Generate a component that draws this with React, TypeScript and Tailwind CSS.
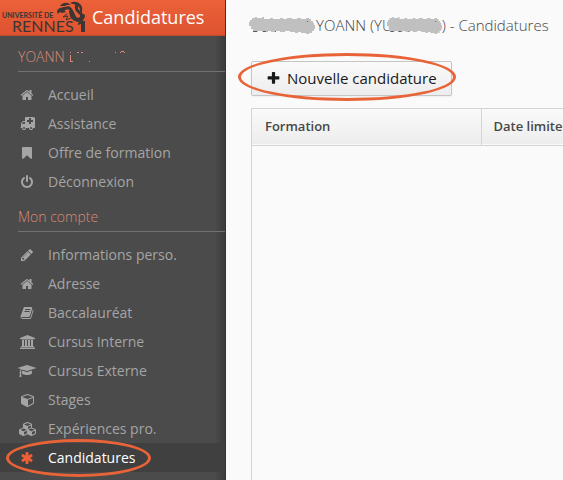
import type { ReactNode } from "react"

type IconName = keyof typeof icons

interface NavItem {
  label: string
  icon: IconName
  active?: boolean
}

const icons = {
  home: {
    width: 1792,
    d: "M1472 992v480q0 26-19 45t-45 19h-384v-384h-256v384h-384q-26 0-45-19t-19-45v-480q0-1 .5-3t.5-3l575-474 575 474q1 2 1 6zm223-69l-62 74q-8 9-21 11h-3q-13 0-21-7l-692-577-692 577q-12 8-24 7-13-2-21-11l-62-74q-8-10-7-23.5t11-21.5l719-599q32-26 76-26t76 26l244 204v-195q0-14 9-23t23-9h192q14 0 23 9t9 23v408l219 182q10 8 11 21.5t-7 23.5z",
  },
  ambulance: {
    width: 1920,
    d: "M640 1408q0-52-38-90t-90-38-90 38-38 90 38 90 90 38 90-38 38-90zm-384-512h384v-256h-158q-14 2-22 9l-195 195q-7 12-9 22v30zm1280 512q0-52-38-90t-90-38-90 38-38 90 38 90 90 38 90-38 38-90zm128-800v-192q0-14-9-23t-23-9h-224v-224q0-14-9-23t-23-9h-192q-14 0-23 9t-9 23v224h-224q-14 0-23 9t-9 23v192q0 14 9 23t23 9h224v224q0 14 9 23t23 9h192q14 0 23-9t9-23v-224h224q14 0 23-9t9-23zm256-544v1280q0 26-19 45t-45 19h-192q0 106-75 181t-181 75-181-75-75-181h-384q0 106-75 181t-181 75-181-75-75-181h-128q-26 0-45-19t-19-45 19-45 45-19v-416q0-26 13-58t32-51l198-198q19-19 51-32t58-13h160v-448q0-26 19-45t45-19h1024q26 0 45 19t19 45z",
  },
  bookmark: {
    width: 1792,
    d: "M1420 128q23 0 44 9 33 13 52.5 41t19.5 62v1289q0 34-19.5 62t-52.5 41q-19 8-44 8-48 0-83-32l-441-424-441 424q-36 33-83 33-23 0-44-9-33-13-52.5-41t-19.5-62v-1289q0-34 19.5-62t52.5-41q21-9 44-9h1048z",
  },
  power: {
    width: 1792,
    d: "M1664 896q0 156-61 298t-164 245-245 164-298 61-298-61-245-164-164-245-61-298q0-182 80.5-343t226.5-270q43-32 95.5-25t83.5 50q32 42 24.5 94.5t-49.5 84.5q-98 74-151.5 181t-53.5 228q0 104 40.5 198.5t109.5 163.5 163.5 109.5 198.5 40.5 198.5-40.5 163.5-109.5 109.5-163.5 40.5-198.5q0-121-53.5-228t-151.5-181q-42-32-49.5-84.5t24.5-94.5q31-43 84-50t95 25q146 109 226.5 270t80.5 343zm-640-768v640q0 52-38 90t-90 38-90-38-38-90v-640q0-52 38-90t90-38 90 38 38 90z",
  },
  pencil: {
    width: 1792,
    d: "M491 1536l91-91-235-235-91 91v107h128v128h107zm523-928q0-22-22-22-10 0-17 7l-542 542q-7 7-7 17 0 22 22 22 10 0 17-7l542-542q7-7 7-17zm-54-192l416 416-832 832h-416v-416zm683 96q0 53-37 90l-166 166-416-416 166-165q36-38 90-38 53 0 91 38l235 234q37 39 37 91z",
  },
  book: {
    width: 1792,
    d: "M1703 478q40 57 18 129l-275 906q-19 64-76.5 107.5t-122.5 43.5h-923q-77 0-148.5-53.5t-99.5-131.5q-24-67-2-127 0-4 3-27t4-37q1-8-3-21.5t-3-19.5q2-11 8-21t16.5-23.5 16.5-23.5q23-38 45-91.5t30-91.5q3-10 .5-30t-.5-28q3-11 17-28t17-23q21-36 42-92t25-90q1-9-2.5-32t.5-28q4-13 22-30.5t22-22.5q19-26 42.5-84.5t27.5-96.5q1-8-3-25.5t-2-26.5q2-8 9-18t18-23 17-21q8-12 16.5-30.5t15-35 16-36 19.5-32 26.5-23.5 36-11.5 47.5 5.5l-1 3q38-9 51-9h761q74 0 114 56t18 130l-274 906q-36 119-71.5 153.5t-128.5 34.5h-869q-27 0-38 15-11 16-1 43 24 70 144 70h923q29 0 56-15.5t35-41.5l300-987q7-22 5-57 38 15 59 43zm-1064 2q-4 13 2 22.5t20 9.5h608q13 0 25.5-9.5t16.5-22.5l21-64q4-13-2-22.5t-20-9.5h-608q-13 0-25.5 9.5t-16.5 22.5zm-83 256q-4 13 2 22.5t20 9.5h608q13 0 25.5-9.5t16.5-22.5l21-64q4-13-2-22.5t-20-9.5h-608q-13 0-25.5 9.5t-16.5 22.5z",
  },
  university: {
    width: 1920,
    d: "M960 0l960 384v128h-128q0 26-20.5 45t-48.5 19h-1526q-28 0-48.5-19t-20.5-45h-128v-128zm-704 640h256v768h128v-768h256v768h128v-768h256v768h128v-768h256v768h59q28 0 48.5 19t20.5 45v64h-1664v-64q0-26 20.5-45t48.5-19h59v-768zm1595 960q28 0 48.5 19t20.5 45v128h-1920v-128q0-26 20.5-45t48.5-19h1782z",
  },
  graduation: {
    width: 2304,
    d: "M1774 836l18 316q4 69-82 128t-235 93.5-323 34.5-323-34.5-235-93.5-82-128l18-316 574 181q22 7 48 7t48-7zm530-324q0 23-22 31l-1120 352q-4 1-10 1t-10-1l-652-206q-43 34-71 111.5t-34 178.5q63 36 63 109 0 69-58 107l58 433q2 14-8 25-9 11-24 11h-192q-15 0-24-11-10-11-8-25l58-433q-58-38-58-107 0-73 65-111 11-207 98-330l-333-104q-22-8-22-31t22-31l1120-352q4-1 10-1t10 1l1120 352q22 8 22 31z",
  },
  cube: {
    width: 1664,
    d: "M896 1629l640-349v-636l-640 233v752zm-64-865l698-254-698-254-698 254zm832-252v768q0 35-18 65t-49 47l-704 384q-28 16-61 16t-61-16l-704-384q-31-17-49-47t-18-65v-768q0-40 23-73t61-47l704-256q22-8 44-8t44 8l704 256q38 14 61 47t23 73z",
  },
  cubes: {
    width: 2176,
    d: "M640 1632l384-192v-314l-384 164v342zm-64-454l404-173-404-173-404 173zm1088 454l384-192v-314l-384 164v342zm-64-454l404-173-404-173-404 173zm-448-293l384-165v-266l-384 164v267zm-64-379l441-189-441-189-441 189zm1088 518v416q0 36-19 67t-52 47l-448 224q-25 14-57 14t-57-14l-448-224q-4-2-7-4-2 2-7 4l-448 224q-25 14-57 14t-57-14l-448-224q-33-16-52-47t-19-67v-416q0-38 21.5-70t56.5-48l434-186v-400q0-38 21.5-70t56.5-48l448-192q23-10 50-10t50 10l448 192q35 16 56.5 48t21.5 70v400l434 186q36 16 57 48t21 70z",
  },
  asterisk: {
    width: 1792,
    d: "M1546 1050q46 26 59.5 77.5t-12.5 97.5l-64 110q-26 46-77.5 59.5t-97.5-12.5l-266-153v307q0 52-38 90t-90 38h-128q-52 0-90-38t-38-90v-307l-266 153q-46 26-97.5 12.5t-77.5-59.5l-64-110q-26-46-12.5-97.5t59.5-77.5l266-154-266-154q-46-26-59.5-77.5t12.5-97.5l64-110q26-46 77.5-59.5t97.5 12.5l266 153v-307q0-52 38-90t90-38h128q52 0 90 38t38 90v307l266-153q46-26 97.5-12.5t77.5 59.5l64 110q26 46 12.5 97.5t-59.5 77.5l-266 154z",
  },
  plus: {
    width: 1792,
    d: "M1600 736v192q0 40-28 68t-68 28h-416v416q0 40-28 68t-68 28h-192q-40 0-68-28t-28-68v-416h-416q-40 0-68-28t-28-68v-192q0-40 28-68t68-28h416v-416q0-40 28-68t68-28h192q40 0 68 28t28 68v416h416q40 0 68 28t28 68z",
  },
}

const userItems: NavItem[] = [
  { label: "Accueil", icon: "home" },
  { label: "Assistance", icon: "ambulance" },
  { label: "Offre de formation", icon: "bookmark" },
  { label: "Déconnexion", icon: "power" },
]

const accountItems: NavItem[] = [
  { label: "Informations perso.", icon: "pencil" },
  { label: "Adresse", icon: "home" },
  { label: "Baccalauréat", icon: "book" },
  { label: "Cursus Interne", icon: "university" },
  { label: "Cursus Externe", icon: "graduation" },
  { label: "Stages", icon: "cube" },
  { label: "Expériences pro.", icon: "cubes" },
  { label: "Candidatures", icon: "asterisk", active: true },
]

function Icon({ name, className }: { name: IconName; className: string }) {
  return (
    <svg viewBox={`0 0 ${icons[name].width} 1792`} className={`w-auto shrink-0 fill-current ${className}`} aria-hidden="true">
      <path d={icons[name].d} />
    </svg>
  )
}

function Logo() {
  return (
    <svg viewBox="0 0 88 35" className="h-[35px] w-[88px] shrink-0 fill-[#3b3533]" aria-hidden="true">
      <text x="2" y="18" fontSize="7" fontFamily="Lato, sans-serif" fontWeight="700">UNIVERSITÉ DE</text>
      <text x="12" y="32" fontSize="16" fontFamily="Lato, sans-serif">RENNES</text>
      <path d="M81 21h4v11h-4v-8l-3 1v-2z" />
      {/* dragon: head, wings, coiled body */}
      <path d="M57 12q0-3 3-4l4-1q3 0 3 2l-3 1 2 2-4 1-2-1-2 2z" />
      <path d="M60 6q3-4 8-3l3 2q-4-1-6 1zM70 3q6-3 10 1 3 3 2 7l-1 5-1-5q0-5-4-6-3-1-6-2z" />
      <g fill="none" stroke="#3b3533" strokeLinecap="round">
        <path d="M64 9q5-3 7 1t4 8q4 3 6 0t-2-6-2-7" strokeWidth="3" />
        <path d="M71 12q1 7 7 8 4 0 5-4" strokeWidth="4" />
        <path d="M67 14l-4 3 5-1-2 4 5-2" strokeWidth="1" />
      </g>
    </svg>
  )
}

// Grey marker stroke that hides part of a name
function Scribble({ className }: { className: string }) {
  return (
    <svg viewBox="0 0 66 17" preserveAspectRatio="none" className={`shrink-0 fill-[#c0c0c0] ${className}`} aria-hidden="true">
      <path d="M0 5H1V3H3V1H6V0H8V1H13V0H15V2H21V1H24V2H31V1H34V2H38V1H43V2H48V1H52V2H57V1H60V2H62V4H64V6H65V8H66V12H65V14H63V16H60V17H57V16H52V15H49V16H46V15H41V14H36V15H31V14H27V15H22V14H19V15H13V14H9V15H6V14H4V12H2V9H0Z" />
      <path d="M4 14h4v1H4zM14 14h3v1h-3zM26 14h1v1h-1zM58 4h1v1h-1z" fill="#5c5c5c" />
    </svg>
  )
}

function NavGroup({ title, items }: { title: ReactNode; items: NavItem[] }) {
  return (
    <section>
      <h2 className="ml-[18px] flex h-7 items-center border-b border-[#717171] pb-0.5 text-sm font-light text-[#d98a77]">
        {title}
      </h2>
      <ul className="pt-2">
        {items.map((item) => (
          <li key={item.label} className="relative">
            <a
              href="#"
              aria-current={item.active ? "page" : undefined}
              className={`flex h-[29px] items-center gap-3 pl-[18px] text-sm ${
                item.active ? "bg-[#404040] text-white" : "text-[#a5a5a5]"
              }`}
            >
              <span className={`flex w-[18px] justify-center ${item.active ? "text-[#ed5f35]" : ""}`}>
                <Icon name={item.icon} className="h-3.5" />
              </span>
              {item.label}
            </a>
            {item.active && (
              <span className="pointer-events-none absolute -top-1 left-1.5 h-[38px] w-[145px] rounded-[50%] border-3 border-[#e96338]" />
            )}
          </li>
        ))}
      </ul>
    </section>
  )
}

export default function App() {
  return (
    <div className="flex min-h-screen overflow-hidden bg-[#fafafa] font-['Open_Sans',sans-serif]">
      <aside className="w-[226px] shrink-0 border-r border-[#363636] bg-[linear-gradient(to_left,#3c3c3c,#4b4b4b_10px)]">
        <header className="flex h-9 items-start gap-1 border-b border-[#b94d2c] bg-linear-to-b from-[#ec6239] to-[#dd5130]">
          <Logo />
          <h1 className="text-lg leading-[35px] text-white">Candidatures</h1>
        </header>
        <nav className="flex flex-col gap-2 pt-2">
          <NavGroup
            title={
              <>
                YOANN
                <svg viewBox="0 0 62 16" className="ml-1 h-4 w-[62px] fill-current" aria-hidden="true">
                  <path d="M1 3h1v1H1zM1 6h1v6h2v1H1zM8 3h2v1H8zM12 3h2v1h-2zM20 12h1v1h-1zM46 3h1v1h-1zM51 3h1v1h-1zM52 2h3v1h1v1h-1V3h-3z" />
                </svg>
              </>
            }
            items={userItems}
          />
          <NavGroup title="Mon compte" items={accountItems} />
        </nav>
      </aside>

      <main className="min-w-0 flex-1 pl-[25px]">
        <h2 className="flex h-[61px] items-center pb-2.5 text-[15px] font-light whitespace-nowrap text-[#464646]">
          <Scribble className="-ml-0.5 h-[17px] w-[66px]" />
          <span className="ml-px">YOANN (YU</span>
          <Scribble className="-ml-1.5 h-[17px] w-[55px]" />
          <span>) - Candidatures</span>
        </h2>

        <div className="relative w-fit">
          <button
            type="button"
            className="flex h-[35px] items-center gap-1.5 rounded-xs border border-[#c5c5c5] bg-linear-to-b from-[#fafafa] to-[#ededed] px-3.5 text-[15px] text-[#191919] shadow-xs"
          >
            <Icon name="plus" className="h-[15px]" />
            Nouvelle candidature
          </button>
          <span className="pointer-events-none absolute -left-[13px] -right-1 -top-2 h-12 rounded-[50%] border-3 border-[#e96338]" />
        </div>

        <div className="mt-3 h-[372px] overflow-hidden border-t border-l border-[#d4d4d4]">
          <table className="w-[460px] table-fixed border-collapse text-left text-[13px] text-[#474747]">
            <thead>
              <tr className="h-9 border-b border-[#d4d4d4] bg-linear-to-b from-[#fafafa] to-[#ededed]">
                <th scope="col" className="w-[229px] border-r border-[#d4d4d4] px-[13px] font-semibold">Formation</th>
                <th scope="col" className="px-3 font-semibold">Date limite</th>
              </tr>
            </thead>
          </table>
        </div>
      </main>
    </div>
  )
}
